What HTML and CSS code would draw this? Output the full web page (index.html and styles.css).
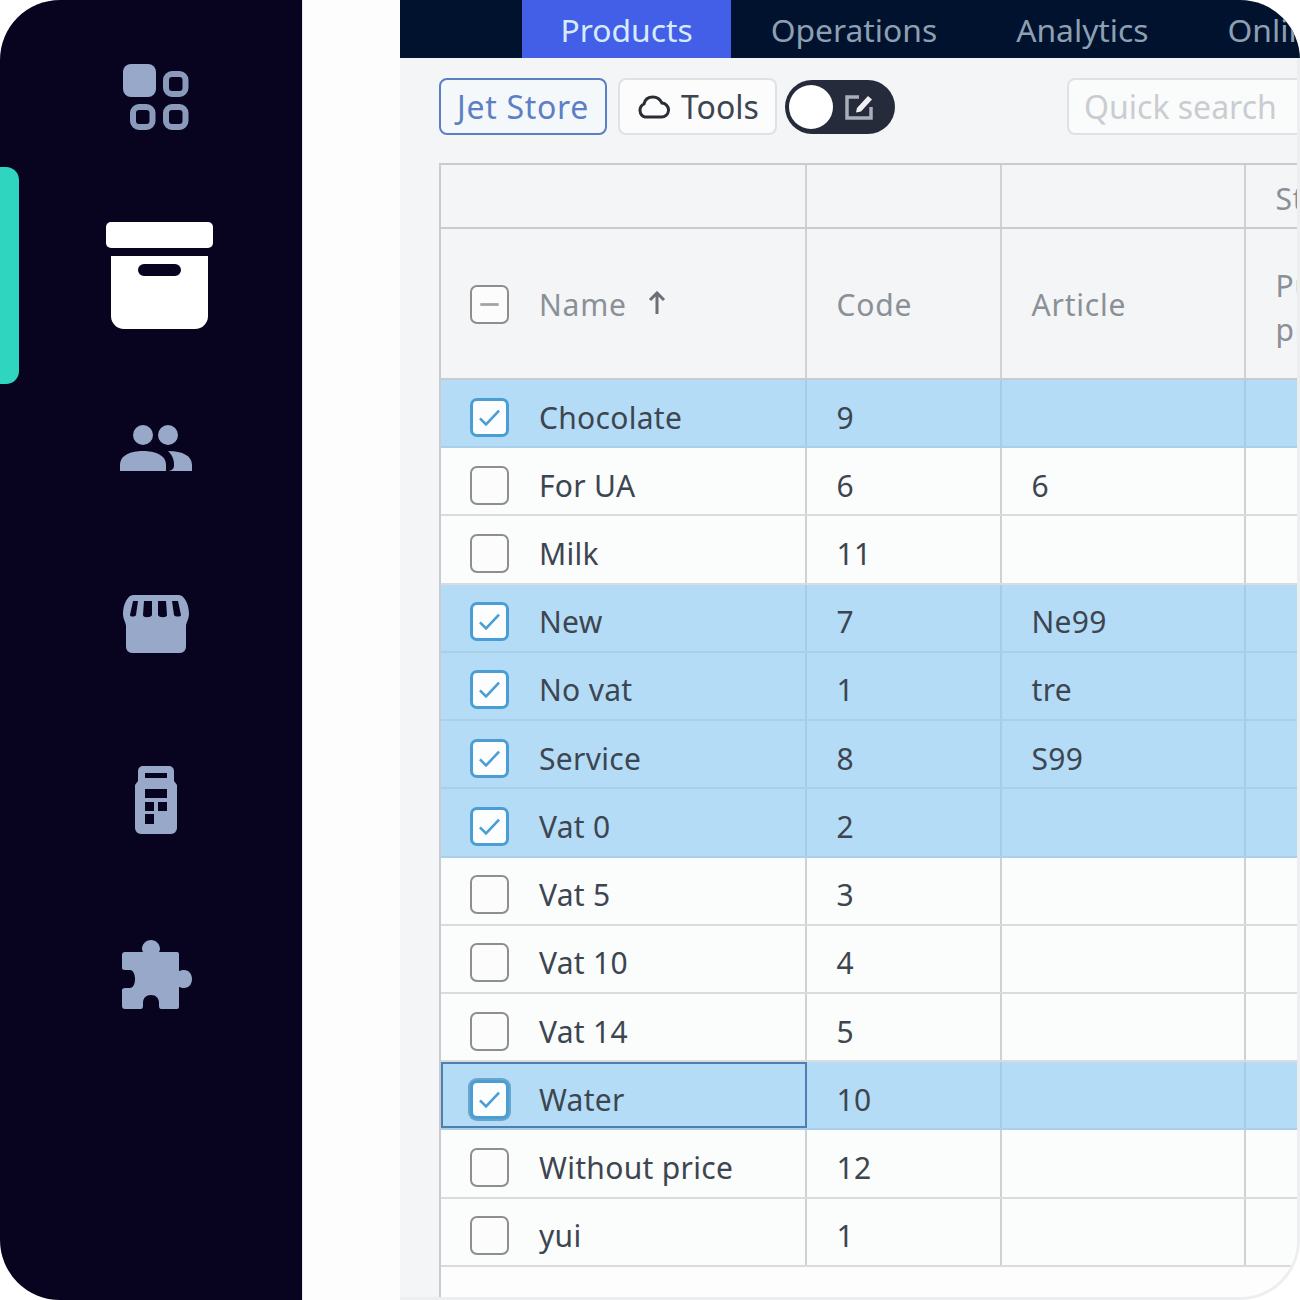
FILE: index.html
```html
<!DOCTYPE html>
<html lang="en">
<head>
<meta charset="utf-8">
<title>Products</title>
<link rel="stylesheet" href="styles.css">
</head>
<body>
<div class="frame">
  <aside class="sidebar">
    <span class="marker"></span>
    <svg class="ic ic-grid" viewBox="0 0 66 66"><rect x="0" y="0" width="33" height="33" rx="8"/><rect class="ring" x="43" y="10" width="19.500" height="20" rx="6"/><rect class="ring" x="10" y="43" width="19.500" height="20" rx="6"/><rect class="ring" x="43" y="43" width="19.500" height="20" rx="6"/></svg>
    <svg class="ic ic-box" viewBox="0 0 107 107"><rect x="0" y="0" width="107" height="26" rx="5"/><path fill-rule="evenodd" d="M5 34h97v60a13 13 0 0 1-13 13H18a13 13 0 0 1-13-13zM38 42a6 6 0 0 0 0 12h31a6 6 0 0 0 0-12z"/></svg>
    <svg class="ic ic-people" viewBox="0 0 72 46"><circle cx="23" cy="10" r="10"/><circle cx="48" cy="10" r="10"/><path d="M0 46v-6c0-10 11-14 23-14s23 4 23 14v6z"/><path d="M48 46h24v-6c0-9-9-14-24-14 4 4 6 8 6 14v1c0 2-2 5-6 5z"/></svg>
    <svg class="ic ic-store" viewBox="0 0 66 58"><path fill-rule="evenodd" d="M10 0h46c5 0 10 9 10 19 0 5-3 9-3 12v21a6 6 0 0 1-6 6H9a6 6 0 0 1-6-6V31c0-3-3-7-3-12C0 9 5 0 10 0zM10 6l-3 14c0 2 5 2 6 0l2-14zM21 6l-1 14c0 3 8 3 9 0V6zM35 6v14c1 3 9 3 9 0L43 6zM49 6l2 14c1 2 7 2 7 0L55 6z"/></svg>
    <svg class="ic ic-calc" viewBox="0 0 42 68"><path fill-rule="evenodd" d="M9 0h25a5 5 0 0 1 5 5v10l3 4v43a6 6 0 0 1-6 6H6a6 6 0 0 1-6-6V19l3-4V5a5 5 0 0 1 6-5zM10 7v5h22V7zM10 23v9h22v-9zM10 36v9h9v-9zM23 36v9h9v-9zM10 48v10h9V48z"/></svg>
    <svg class="ic ic-puzzle" viewBox="0 0 70 69"><path d="M29 0c5 0 9 4 9 9 0 1-.5 2-1 3H55a2 2 0 0 1 2 2V31c2-.5 3-1 5-1 5 0 8 4 8 9s-3 9-8 9c-2 0-3-.5-5-1V67a2 2 0 0 1-2 2H39c-1 0-2-1-2-3V63c0-5-3-8-8-8s-8 3-8 8v3c0 2-1 3-2 3H3a3 3 0 0 1-3-3V50c0-1 1-2 3-2h5c3 0 5-4 5-9s-2-9-5-9H3c-2 0-3-1-3-2V15a3 3 0 0 1 3-3H21c-.5-1-1-2-1-3 0-5 4-9 9-9z"/></svg>
  </aside>
  <div class="gutter"></div>
  <main class="main">
    <nav class="topnav">
      <a class="tab active">Products</a>
      <a class="tab">Operations</a>
      <a class="tab">Analytics</a>
      <a class="tab">Online</a>
    </nav>
    <div class="content">
      <div class="toolbar">
        <button class="btn btn-store">Jet Store</button>
        <button class="btn btn-tools"><svg class="cloud" viewBox="0 0 34 24"><path d="M9 22h16a7 7 0 0 0 1-14C24 4 21 2 17 2s-8 2-9 7a7 7 0 0 0 1 13z"/></svg>Tools</button>
        <div class="toggle"><span class="knob"></span><svg class="edit" viewBox="0 0 28 25"><path class="edit-frame" d="M14 2H2v21h24V12"/><path class="edit-pen" d="M12 13 23 1l4 3.500-11 12-5 1z"/></svg></div>
        <div class="search">Quick search</div>
      </div>
      <div class="table">
        <div class="row row-head1">
          <div class="cell"></div><div class="cell"></div><div class="cell"></div><div class="cell head-text">Stock</div>
        </div>
        <div class="row row-head2">
          <div class="cell cell-name head-text"><span class="cb"><svg viewBox="0 0 38 38"><path class="minus" d="M9 19h20"/></svg></span><span>Name</span><svg class="sort" viewBox="0 0 18 24"><path d="M9 23V3M2 9l7-7 7 7"/></svg></div>
          <div class="cell head-text">Code</div>
          <div class="cell head-text">Article</div>
          <div class="cell head-text multi">Purchase<br>price</div>
        </div>
        <div class="row sel"><div class="cell cell-name"><span class="cb on"><svg viewBox="0 0 38 38"><path class="tick" d="M8 20l7 7L30 11"/></svg></span><span>Chocolate</span></div><div class="cell">9</div><div class="cell"></div><div class="cell"></div></div>
        <div class="row"><div class="cell cell-name"><span class="cb"></span><span>For UA</span></div><div class="cell">6</div><div class="cell">6</div><div class="cell"></div></div>
        <div class="row"><div class="cell cell-name"><span class="cb"></span><span>Milk</span></div><div class="cell">11</div><div class="cell"></div><div class="cell"></div></div>
        <div class="row sel"><div class="cell cell-name"><span class="cb on"><svg viewBox="0 0 38 38"><path class="tick" d="M8 20l7 7L30 11"/></svg></span><span>New</span></div><div class="cell">7</div><div class="cell">Ne99</div><div class="cell"></div></div>
        <div class="row sel"><div class="cell cell-name"><span class="cb on"><svg viewBox="0 0 38 38"><path class="tick" d="M8 20l7 7L30 11"/></svg></span><span>No vat</span></div><div class="cell">1</div><div class="cell">tre</div><div class="cell"></div></div>
        <div class="row sel"><div class="cell cell-name"><span class="cb on"><svg viewBox="0 0 38 38"><path class="tick" d="M8 20l7 7L30 11"/></svg></span><span>Service</span></div><div class="cell">8</div><div class="cell">S99</div><div class="cell"></div></div>
        <div class="row sel"><div class="cell cell-name"><span class="cb on"><svg viewBox="0 0 38 38"><path class="tick" d="M8 20l7 7L30 11"/></svg></span><span>Vat 0</span></div><div class="cell">2</div><div class="cell"></div><div class="cell"></div></div>
        <div class="row"><div class="cell cell-name"><span class="cb"></span><span>Vat 5</span></div><div class="cell">3</div><div class="cell"></div><div class="cell"></div></div>
        <div class="row"><div class="cell cell-name"><span class="cb"></span><span>Vat 10</span></div><div class="cell">4</div><div class="cell"></div><div class="cell"></div></div>
        <div class="row"><div class="cell cell-name"><span class="cb"></span><span>Vat 14</span></div><div class="cell">5</div><div class="cell"></div><div class="cell"></div></div>
        <div class="row sel"><div class="cell cell-name focus"><span class="cb on ring"><svg viewBox="0 0 38 38"><path class="tick" d="M8 20l7 7L30 11"/></svg></span><span>Water</span></div><div class="cell">10</div><div class="cell"></div><div class="cell"></div></div>
        <div class="row"><div class="cell cell-name"><span class="cb"></span><span>Without price</span></div><div class="cell">12</div><div class="cell"></div><div class="cell"></div></div>
        <div class="row"><div class="cell cell-name"><span class="cb"></span><span>yui</span></div><div class="cell">1</div><div class="cell"></div><div class="cell"></div></div>
      </div>
    </div>
  </main>
</div>
</body>
</html>
```
FILE: styles.css
```css
* { box-sizing: border-box; }
html, body { margin: 0; padding: 0; background: #fff; }
body { font-family: "Noto Sans", "Open Sans", sans-serif; font-size: 30px; color: #3d4650; }

.frame {
  width: 1300px;
  height: 1300px;
  display: flex;
  overflow: hidden;
  border-radius: 60px;
}

.sidebar {
  width: 302px;
  flex: none;
  position: relative;
  background: #08041f;
  display: flex;
  flex-direction: column;
  align-items: flex-start;
}
.marker {
  position: absolute;
  left: 0;
  top: 167px;
  width: 19px;
  height: 217px;
  background: #30d5bf;
  border-radius: 0 13px 13px 0;
}
.ic { display: block; fill: #98a8c8; flex: none; }
.ring { fill: none; stroke: #8b9abb; stroke-width: 6; }
.ic-grid { width: 66px; height: 66px; margin: 64px 0 0 123px; }
.ic-box { width: 107px; height: 107px; margin: 92px 0 0 106px; fill: #fff; }
.ic-people { width: 72px; height: 46px; margin: 96px 0 0 120px; }
.ic-store { width: 66px; height: 58px; margin: 124px 0 0 123px; }
.ic-calc { width: 42px; height: 68px; margin: 113px 0 0 135px; }
.ic-puzzle { width: 70px; height: 69px; margin: 106px 0 0 122px; }

.gutter { width: 98px; flex: none; background: #fdfdfd; border-left: 1px solid #e8e9ec; }

.main {
  width: 900px;
  flex: none;
  display: flex;
  flex-direction: column;
  overflow: hidden;
  background: #f3f5f6;
}
.topnav {
  height: 58px;
  flex: none;
  display: flex;
  padding-left: 122px;
  background: #01122e;
  white-space: nowrap;
  font-size: 31.800px;
}
.tab {
  display: flex;
  align-items: center;
  flex: none;
  padding: 0 39.500px;
  color: #8da0b2;
  height: 58px;
}
.tab.active { background: #435fe8; color: #d6ebfa; padding: 0 38.500px; }

.content {
  flex: 1;
  min-height: 0;
  overflow: hidden;
  background: #f3f5f6;
  border-right: 3px solid #eceef0;
  border-bottom: 3px solid #eceef0;
  border-bottom-right-radius: 60px;
}
.toolbar {
  height: 105px;
  display: flex;
  align-items: flex-start;
  padding: 20px 0 0 39px;
  white-space: nowrap;
  font-size: 32px;
}
.btn {
  font: inherit;
  flex: none;
  height: 57px;
  border-radius: 8px;
  padding: 0;
  display: flex;
  align-items: center;
}
.btn-store {
  width: 168px;
  justify-content: center;
  background: #f5f8fb;
  border: 2px solid #5b7fc6;
  color: #5d7fc4;
  letter-spacing: 0.700px;
}
.btn-tools {
  width: 159px;
  margin-left: 11px;
  padding-left: 16px;
  background: #fcfcfc;
  border: 2px solid #e0e1e3;
  color: #3d4650;
}
.cloud { width: 34px; height: 24px; margin-right: 11px; fill: none; stroke: #2a2d33; stroke-width: 3; flex: none; }
.toggle {
  width: 110px;
  height: 54px;
  flex: none;
  margin: 2px 0 0 8px;
  background: #262b3c;
  border-radius: 27px;
  display: flex;
  align-items: center;
  padding-left: 4px;
}
.knob { width: 44px; height: 44px; border-radius: 50%; background: #fff; flex: none; }
.edit { width: 28px; height: 25px; margin-left: 12px; flex: none; }
.edit-frame { fill: none; stroke: #a9aeb8; stroke-width: 3.500; }
.edit-pen { fill: #eef0f3; }
.search {
  width: 260px;
  height: 57px;
  margin-left: 172px;
  padding-left: 15px;
  display: flex;
  align-items: center;
  flex: none;
  background: #fafbfb;
  border: 2px solid #dfe1e3;
  border-radius: 8px;
  color: #c9cdd1;
}

.table {
  margin-left: 39px;
  width: 861px;
  border-left: 2px solid #c8cbd0;
  border-top: 2px solid #c8cbd0;
  background: #fdfdfd;
  height: 1134px;
}
.row {
  display: grid;
  grid-template-columns: 366px 195px 244px 1fr;
  height: 68.230px;
  background: #fbfcfc;
  border-bottom: 2px solid #d9dbdd;
  letter-spacing: 0.3px;
}
.row-head1 { height: 64px; background: #f3f5f6; border-bottom-color: #c8cbd0; }
.row-head2 { height: 151px; background: #f3f5f6; border-bottom-color: #c8cbd0; }
.sel { background: #b4dcf6; border-bottom-color: #a9d0ea; }
.cell {
  display: flex;
  align-items: center;
  padding: 8px 0 0 29.500px;
  border-right: 2px solid #cfd2d5;
  white-space: nowrap;
  overflow: hidden;
  position: relative;
}
.sel .cell { border-right-color: #a6cce6; }
.cell:last-child { border-right: 0; }
.row-head1 .cell { padding-top: 5px; }
.row-head2 .cell { padding-top: 2px; }
.head-text { color: #8b9096; letter-spacing: 0.800px; }
.row-head2 .multi { line-height: 44px; padding-top: 8px; }
.cell-name { padding-left: 29px; gap: 30px; }
.focus { outline: 2px solid #4e7fae; outline-offset: -2px; }

.cb {
  width: 39px;
  height: 39px;
  flex: none;
  border: 2px solid #8e8e8e;
  border-radius: 7px;
  background: #fcfcfc;
  display: block;
}
.cb svg { display: block; width: 100%; height: 100%; fill: none; }
.cb.on { border: 3px solid #4a9ed4; background: #fbfdfe; }
.cb.ring { box-shadow: 0 0 0 2px #6aa6cc; }
.tick { stroke: #4a9ed4; stroke-width: 3; }
.minus { stroke: #a0a3a8; stroke-width: 3; }
.sort { width: 18px; height: 24px; margin-left: -9px; margin-top: -4px; fill: none; stroke: #6b7078; stroke-width: 3; }
```
